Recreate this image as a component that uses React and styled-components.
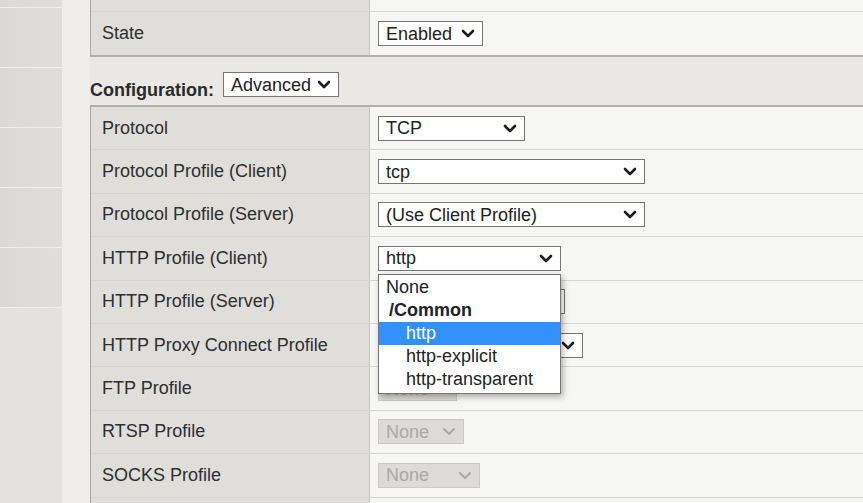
import React from 'react'
import styled, { createGlobalStyle } from 'styled-components'

const GlobalStyle = createGlobalStyle`
  html, body {
    margin: 0;
    padding: 0;
    background: #eeede9;
    font-family: "Liberation Sans", Arial, sans-serif;
    color: #2e2e2e;
    overflow: hidden;
  }
`;

const Page = styled.div`
  display: flex;
  width: 863px;
  height: 503px;
  overflow: hidden;
`;

const Sidebar = styled.div`
  width: 62px;
  flex-shrink: 0;
  display: flex;
  flex-direction: column;
  background: #e3e2df;
`;

const SideBlock = styled.div`
  height: ${p => p.$h}px;
  flex-shrink: 0;
  background: linear-gradient(90deg, #dad9d6, #dfdedb);
  border-bottom: 1px solid #f0efec;
`;

const Main = styled.div`
  flex: 1;
  min-width: 0;
  margin-left: 28px;
  display: flex;
  flex-direction: column;

  & > * {
    flex-shrink: 0;
  }
`;

const Table = styled.div`
  display: flex;
  flex-direction: column;
  border-left: 1px solid #a9a8a5;
  border-top: ${p => (p.$top ? '2px solid #b1b0ad' : 'none')};
  border-bottom: ${p => (p.$bottom ? '2px solid #b1b0ad' : 'none')};
  width: 900px;
`;

const Row = styled.div`
  display: grid;
  grid-template-columns: 279px 1fr;
  flex-shrink: 0;
  height: ${p => p.$h || 43.4}px;
  box-sizing: border-box;
  border-bottom: ${p => (p.$last ? 'none' : '1px solid #d6d5d2')};
`;

const Label = styled.div`
  background: #dfdedb;
  border-right: 1px solid #c6c5c2;
  display: flex;
  align-items: center;
  padding-left: 11px;
  font-size: 18px;
  color: #2e2e2e;
`;

const Value = styled.div`
  background: #f6f6f4;
  display: flex;
  align-items: center;
  padding-left: 8px;
`;

const ConfigHeader = styled.div`
  height: 48px;
  box-sizing: border-box;
  background: #e9e8e4;
  display: flex;
  align-items: flex-start;
  padding-top: 15px;
  gap: 9px;
`;

const ConfigLabel = styled.span`
  font-size: 18px;
  font-weight: bold;
  color: #2a2a2a;
  margin-top: 8px;
`;

const SelectBox = styled.div`
  position: relative;
  width: ${p => p.$w}px;
  height: 25px;
  box-sizing: border-box;
  border: 1px solid ${p => (p.$disabled ? '#cbcac7' : '#767676')};
  background: ${p => (p.$disabled ? '#dcdbd8' : '#ffffff')};
  color: ${p => (p.$disabled ? '#a9a9a7' : '#222')};
  display: flex;
  align-items: center;
  justify-content: space-between;
  padding: 0 7px 0 7px;
  font-size: 18px;
  line-height: 1;
  white-space: nowrap;
  overflow: hidden;
`;

const Chevron = ({ disabled }) => (
  <svg width="14" height="9" viewBox="0 0 14 9" style={{ flexShrink: 0 }}>
    <path
      d="M2 2 L7 7 L12 2"
      fill="none"
      stroke={disabled ? '#a9a9a7' : '#1c1c1c'}
      strokeWidth={disabled ? 2 : 2.6}
      strokeLinecap="round"
      strokeLinejoin="round"
    />
  </svg>
);

const Select = ({ w, value, disabled }) => (
  <SelectBox $w={w} $disabled={disabled}>
    <span>{value}</span>
    <Chevron disabled={disabled} />
  </SelectBox>
);

const DropWrap = styled.div`
  position: relative;
`;

const DropList = styled.div`
  position: absolute;
  top: 28px;
  left: 0;
  width: 183px;
  box-sizing: border-box;
  border: 1px solid #767676;
  background: #fff;
  box-shadow: 2px 3px 6px rgba(0, 0, 0, 0.3);
  padding: 1px 0 2px;
  z-index: 10;
`;

const Option = styled.div`
  height: 23px;
  display: flex;
  align-items: center;
  font-size: 18px;
  padding-left: ${p => p.$indent}px;
  font-weight: ${p => (p.$bold ? 'bold' : 'normal')};
  background: ${p => (p.$active ? '#3390ff' : 'transparent')};
  color: ${p => (p.$active ? '#fff' : '#222')};
`;

const rows = [
  { label: 'Protocol', select: { w: 147, value: 'TCP' } },
  { label: 'Protocol Profile (Client)', select: { w: 267, value: 'tcp' } },
  { label: 'Protocol Profile (Server)', select: { w: 267, value: '(Use Client Profile)' } },
  { label: 'HTTP Profile (Client)', select: { w: 183, value: 'http' }, open: true },
  { label: 'HTTP Profile (Server)', select: { w: 187, value: 'None' } },
  { label: 'HTTP Proxy Connect Profile', select: { w: 205, value: 'None' } },
  { label: 'FTP Profile', select: { w: 79, value: 'None', disabled: true } },
  { label: 'RTSP Profile', select: { w: 86, value: 'None', disabled: true } },
  { label: 'SOCKS Profile', select: { w: 102, value: 'None', disabled: true } },
  { label: '', select: null },
];

const options = [
  { text: 'None', indent: 7 },
  { text: '/Common', indent: 10, bold: true },
  { text: 'http', indent: 27, active: true },
  { text: 'http-explicit', indent: 27 },
  { text: 'http-transparent', indent: 27 },
];

export default function App() {
  return (
    <Page>
      <GlobalStyle />
      <Sidebar>
        <SideBlock $h={7} />
        <SideBlock $h={59} />
        <SideBlock $h={59} />
        <SideBlock $h={59} />
        <SideBlock $h={59} />
        <SideBlock $h={59} />
      </Sidebar>
      <Main>
        <Table $bottom>
          <Row $h={12}>
            <Label />
            <Value />
          </Row>
          <Row $h={43} $last>
            <Label>State</Label>
            <Value>
              <Select w={105} value="Enabled" />
            </Value>
          </Row>
        </Table>
        <ConfigHeader>
          <ConfigLabel>Configuration:</ConfigLabel>
          <Select w={116} value="Advanced" />
        </ConfigHeader>
        <Table $top>
          {rows.map((r, i) => (
            <Row key={i}>
              <Label>{r.label}</Label>
              <Value>
                {r.select && (
                  r.open ? (
                    <DropWrap>
                      <Select {...r.select} />
                      <DropList>
                        {options.map(o => (
                          <Option key={o.text} $indent={o.indent} $bold={o.bold} $active={o.active}>
                            {o.text}
                          </Option>
                        ))}
                      </DropList>
                    </DropWrap>
                  ) : (
                    <Select {...r.select} />
                  )
                )}
              </Value>
            </Row>
          ))}
        </Table>
      </Main>
    </Page>
  );
}
